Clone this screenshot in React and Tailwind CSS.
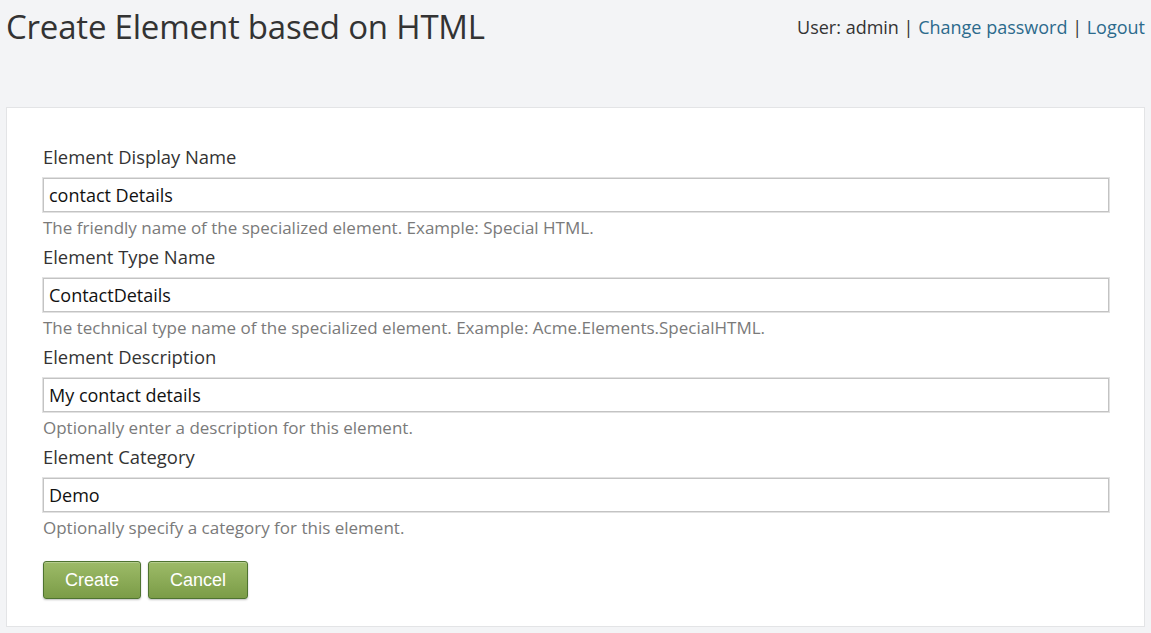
import React from 'react';

const fields = [
  {
    label: 'Element Display Name',
    value: 'contact Details',
    help: 'The friendly name of the specialized element. Example: Special HTML.',
  },
  {
    label: 'Element Type Name',
    value: 'ContactDetails',
    help: 'The technical type name of the specialized element. Example: Acme.Elements.SpecialHTML.',
  },
  {
    label: 'Element Description',
    value: 'My contact details',
    help: 'Optionally enter a description for this element.',
  },
  {
    label: 'Element Category',
    value: 'Demo',
    help: 'Optionally specify a category for this element.',
  },
];

const GreenButton = ({ children }) => (
  <button
    type="button"
    className="h-[38px] rounded-[3px] border border-[#4e7330] bg-gradient-to-b from-[#9dbb68] to-[#7b9c47] px-[21px] text-[18px] text-white shadow-[0_1px_2px_rgba(0,0,0,0.25),inset_0_1px_0_rgba(255,255,255,0.25)] [font-family:'Liberation_Sans',Arial,sans-serif]"
  >
    {children}
  </button>
);

export default function App() {
  return (
    <div className="min-h-[633px] bg-[#f3f4f6] px-[6px] pb-[6px] text-[#333] [font-family:'Open_Sans',sans-serif]">
      {/* Header */}
      <div className="flex h-[107px] items-start justify-between">
        <h1 className="mt-[4px] text-[33px] leading-[46px] tracking-[-0.2px] text-[#333]">
          Create Element based on HTML
        </h1>
        <div className="mt-[14px] text-[18px] leading-[26px] text-[#333]">
          User: admin |{' '}
          <a href="#" className="text-[#2c6a8c]">Change password</a>{' '}
          |{' '}
          <a href="#" className="text-[#2c6a8c]">Logout</a>
        </div>
      </div>

      {/* Form card */}
      <div className="border border-[#e3e4e6] bg-white pl-[36px] pr-[35px] pt-[37px] pb-[27px]">
        {fields.map((f) => (
          <div key={f.label} className="pb-[6px]">
            <label className="mb-[9px] block text-[18.4px] leading-[24px] text-[#333]">
              {f.label}
            </label>
            <input
              type="text"
              defaultValue={f.value}
              className="block h-[34px] w-full border border-[#c3c3c3] px-[5px] text-[18px] text-[#111] shadow-[0_0_0_1px_#e2e2e2] outline-none"
            />
            <p className="mt-[5px] text-[17px] leading-[22px] text-[#7a7a7a]">{f.help}</p>
          </div>
        ))}
        <div className="mt-[16px] flex gap-[7px]">
          <GreenButton>Create</GreenButton>
          <GreenButton>Cancel</GreenButton>
        </div>
      </div>
    </div>
  );
}
